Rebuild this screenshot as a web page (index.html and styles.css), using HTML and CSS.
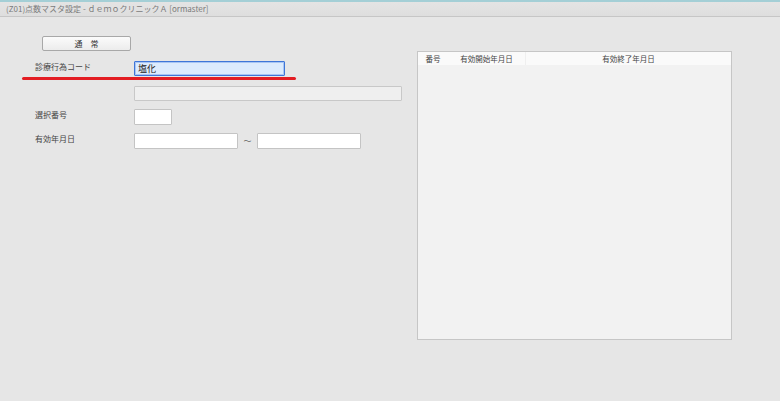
FILE: index.html
```html
<!DOCTYPE html>
<html lang="ja">
<head>
  <meta charset="UTF-8">
  <title>点数マスタ設定</title>
  <link rel="stylesheet" href="styles.css">
</head>
<body>
  <div class="titlebar">(Z01)点数マスタ設定 - ｄｅｍｏクリニックＡ [ormaster]</div>

  <div class="main">
    <div class="form">
      <button class="mode-btn">通　常</button>

      <div class="row first">
        <label class="label">診療行為コード</label>
        <input class="field code focused" type="text" value="塩化">
      </div>
      <div class="mark"></div>

      <div class="row after-mark">
        <span class="label"></span>
        <input class="field name" type="text" disabled>
      </div>

      <div class="row">
        <label class="label">選択番号</label>
        <input class="field num" type="text">
      </div>

      <div class="row">
        <label class="label">有効年月日</label>
        <input class="field date" type="text">
        <span class="tilde">～</span>
        <input class="field date" type="text">
      </div>
    </div>

    <div class="list">
      <table class="list-table">
        <thead>
          <tr>
            <th class="c-no">番号</th>
            <th class="c-start">有効開始年月日</th>
            <th class="c-end">有効終了年月日</th>
          </tr>
        </thead>
        <tbody></tbody>
      </table>
    </div>
  </div>
</body>
</html>
```

FILE: styles.css
```css
body {
  margin: 0;
  background-color: #e6e6e6;
  font-family: "Noto Sans CJK JP", "Liberation Sans", sans-serif;
  font-size: 8px;
  color: #444;
  border-top: 2px solid #a4cfd6;
}

.titlebar {
  height: 14px;
  line-height: 14px;
  padding-left: 6px;
  color: #7a7a7a;
  font-size: 8px;
  background: linear-gradient(#e4e4e4, #dedede);
  border-bottom: 1px solid #c6c6c6;
}

.main {
  display: flex;
  gap: 15px;
}

.form {
  width: 367px;
  padding-left: 35px;
  padding-top: 19px;
}

.mode-btn {
  display: block;
  margin-left: 7px;
  width: 89px;
  height: 15px;
  padding: 0;
  font-family: inherit;
  font-size: 8px;
  color: #333;
  background: linear-gradient(#fbfbfb, #ececec);
  border: 1px solid #a8a8a8;
  border-radius: 2px;
}

.row {
  display: flex;
  align-items: flex-start;
  margin-top: 8px;
}

.row.first {
  margin-top: 10px;
}

.row.after-mark {
  margin-top: 6px;
}

.label {
  width: 99px;
  flex-shrink: 0;
  padding-top: 1px;
  line-height: 10px;
  color: #444;
}

.field {
  box-sizing: border-box;
  height: 15px;
  margin: 0;
  padding: 0 3px;
  font-family: inherit;
  font-size: 8px;
  color: #222;
  background: #fff;
  border: 1px solid #c4c4c4;
  border-radius: 1px;
  outline: none;
}

.field.focused {
  background: #dcebfd;
  border: 1px solid #3f76d8;
  box-shadow: inset 0 0 0 1px #a9c6f3;
  font-size: 9px;
}

.code { width: 151px; }
.name { width: 268px; background: #efefef; border-color: #c8c8c8; }
.num { width: 38px; height: 16px; }
.date { width: 104px; height: 16px; }

.tilde {
  width: 19px;
  text-align: center;
  line-height: 16px;
  color: #666;
}

.mark {
  width: 274px;
  height: 3px;
  margin: 1px 0 0 -13px;
  background: #e31d23;
  border-radius: 2px;
}

.list {
  margin-top: 34px;
  width: 313px;
  height: 287px;
  background: #f2f2f2;
  border: 1px solid #c6c6c6;
}

.list-table {
  width: 100%;
  border-collapse: collapse;
}

.list-table th {
  height: 13px;
  padding: 0;
  font-weight: normal;
  font-size: 7.5px;
  color: #444;
  background: #fafafa;
}

.list-table .c-end {
  border-left: 1px solid #efefef;
}

.c-no { width: 30px; }
.c-start { width: 77px; }
```
